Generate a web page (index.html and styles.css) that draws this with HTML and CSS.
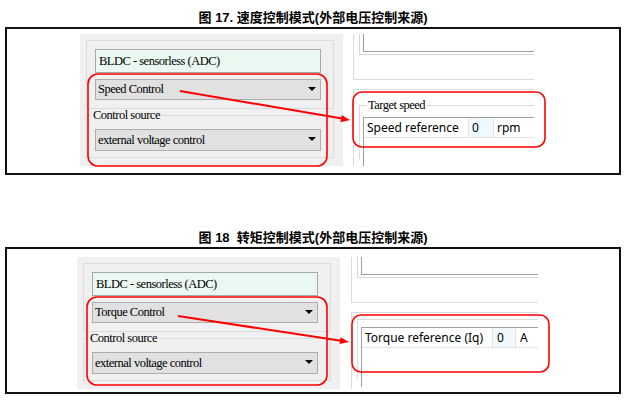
FILE: index.html
```html
<!DOCTYPE html>
<html lang="zh-CN">
<head>
  <meta charset="UTF-8" />
  <title>速度与转矩控制模式</title>
  <link rel="stylesheet" href="styles.css">
</head>
<body>

  <div class="figure">
    <div class="fig-title">图 17. 速度控制模式(外部电压控制来源)</div>
    <div class="fig-box">
      <div class="shot-left">
        <div class="group">
          <div class="textbox">BLDC - sensorless (ADC)</div>
          <div class="combo">Speed Control</div>
        </div>
        <fieldset class="group group-src">
          <legend>Control source</legend>
          <div class="combo tall">external voltage control</div>
        </fieldset>
      </div>

      <div class="shot-right">
        <div class="frame-a">
          <div class="preview-outer"><div class="preview-inner"></div></div>
        </div>
        <div class="frame-b">
          <fieldset class="target">
            <legend>Target speed</legend>
            <div class="grid">
              <div class="row">
                <div class="cell col-name">Speed reference</div>
                <div class="cell col-value">0</div>
                <div class="cell col-unit">rpm</div>
              </div>
            </div>
          </fieldset>
        </div>
      </div>

      <!-- red annotations drawn over the screenshot -->
      <svg class="marks" width="616" height="148" viewBox="0 0 616 148">
        <rect x="83" y="47" width="239" height="92" rx="10" />
        <rect x="348" y="65" width="192" height="55" rx="9" />
        <line x1="175" y1="64" x2="337" y2="91.6" />
        <polygon points="345,93 335.5,95.2 336.7,87.9" />
      </svg>
    </div>
  </div>

  <div class="figure second">
    <div class="fig-title">图 18&nbsp; 转矩控制模式(外部电压控制来源)</div>
    <div class="fig-box">
      <div class="shot-left">
        <div class="group">
          <div class="textbox">BLDC - sensorless (ADC)</div>
          <div class="combo">Torque Control</div>
        </div>
        <fieldset class="group group-src">
          <legend>Control source</legend>
          <div class="combo tall">external voltage control</div>
        </fieldset>
      </div>

      <div class="shot-right torque">
        <div class="frame-a">
          <div class="preview-outer"><div class="preview-inner"></div></div>
        </div>
        <div class="frame-b">
          <fieldset class="target no-label">
            <div class="grid">
              <div class="row">
                <div class="cell col-name">Torque reference (Iq)</div>
                <div class="cell col-value">0</div>
                <div class="cell col-unit">A</div>
              </div>
            </div>
          </fieldset>
        </div>
      </div>

      <svg class="marks" width="616" height="147" viewBox="0 0 616 147">
        <rect x="82" y="50" width="240" height="88" rx="10" />
        <rect x="347" y="68" width="197" height="57" rx="9" />
        <line x1="173" y1="69" x2="336" y2="93.8" />
        <polygon points="344,95 334.6,97.1 335.6,90.2" />
      </svg>
    </div>
  </div>

</body>
</html>
```

FILE: styles.css
```css
* { box-sizing: border-box; }

body {
  margin: 0;
  background: #fff;
  color: #000;
  font-family: "Liberation Sans", sans-serif;
}

.figure { padding-top: 8px; }
.figure.second { padding-top: 53px; }

.fig-title {
  height: 19px;
  line-height: 19px;
  text-align: center;
  font-family: "Liberation Sans", "Noto Sans CJK SC", sans-serif;
  font-size: 13px;
  font-weight: bold;
}

.fig-box {
  position: relative;
  display: flex;
  width: 616px;
  height: 148px;
  margin-left: 5px;
  border: 2px solid #111;
  padding: 5px 0 0 73px;
}

.second .fig-box {
  height: 147px;
  padding: 8px 0 0 70px;
}

/* left screenshot: motor / control panel */
.shot-left {
  width: 263px;
  height: 132px;
  background: #f0f0f0;
  padding: 6px 9px 0 6px;
  font-family: "Liberation Serif", serif;
  font-size: 12.5px;
  letter-spacing: -0.5px;
}

.group {
  border: 1px solid #dcdcdc;
  padding: 8px 0 8px 8px;
}

.textbox {
  width: 226px;
  height: 24px;
  line-height: 22px;
  padding-left: 3px;
  border: 1px solid #a8a8a8;
  background: #e9f8f1;
}

.combo {
  position: relative;
  width: 226px;
  height: 21px;
  line-height: 19px;
  padding-left: 2px;
  border: 1px solid #adadad;
  background: #e1e1e1;
}

.combo.tall { height: 22px; line-height: 20px; }

.combo::after {
  content: "";
  position: absolute;
  right: 4px;
  top: 7px;
  border-left: 4px solid transparent;
  border-right: 4px solid transparent;
  border-top: 4px solid #000;
}

.textbox + .combo { margin-top: 6px; }

fieldset.group-src {
  margin: 0;
  min-width: 0;
  padding: 7px 0 6px 8px;
}

fieldset legend {
  padding: 0 2px;
  margin-left: -4px;
  line-height: 13px;
}

/* right screenshot: parameter grid */
.shot-right {
  display: flex;
  flex-direction: column;
  width: 191px;
  height: 132px;
  overflow: hidden;
  padding-left: 10px;
  background: #fff;
}

.shot-right.torque { width: 198px; padding-left: 11px; }

.frame-a {
  flex: none;
  height: 46px;
  padding-left: 5px;
  border-left: 1px solid #dcdcdc;
  border-bottom: 1px solid #dcdcdc;
}

.preview-outer {
  height: 21px;
  padding-left: 3px;
  border-left: 1px solid #d6d6d6;
  border-bottom: 1px solid #d6d6d6;
}

.preview-inner {
  height: 18px;
  border-left: 1px solid #a0a0a0;
  border-bottom: 1px solid #a0a0a0;
}

.frame-b {
  flex: 1;
  margin-top: 9px;
  padding-left: 5px;
  border-left: 1px solid #dcdcdc;
  border-top: 1px solid #dcdcdc;
}

fieldset.target {
  margin: 9px 0 0;
  min-width: 0;
  height: 60px;
  padding: 5px 0 0 3px;
  border: none;
  border-left: 1px solid #dcdcdc;
  border-top: 1px solid #dcdcdc;
  font-family: "Liberation Serif", serif;
  font-size: 12.5px;
  letter-spacing: -0.5px;
}

fieldset.target legend { margin-left: 3px; }

fieldset.target.no-label {
  margin-top: 6px;
  padding-top: 7px;
}

.grid {
  height: 60px;
  border-left: 1px solid #a0a0a0;
  border-top: 1px solid #a0a0a0;
  font-family: "Noto Sans", sans-serif;
  font-size: 12px;
  letter-spacing: 0;
}

.row { display: flex; }

.cell {
  flex: none;
  height: 20px;
  line-height: 19px;
  padding-left: 3px;
  white-space: nowrap;
  border-right: 1px solid #e3e3e3;
  border-bottom: 1px solid #e3e3e3;
}

.col-name { width: 105px; }
.col-value { width: 25px; background: #f0f9fd; }
.col-unit { width: 60px; }

.torque .col-name { width: 131px; }
.torque .col-value { width: 23px; padding-left: 4px; }
.torque .col-unit { padding-left: 4px; }

/* annotation overlay */
.marks {
  position: absolute;
  left: -2px;
  top: -2px;
  overflow: visible;
}

.marks rect {
  fill: none;
  stroke: #f00;
  stroke-width: 1.6;
}

.marks line {
  stroke: #f00;
  stroke-width: 2;
}

.marks polygon { fill: #f00; }
```
